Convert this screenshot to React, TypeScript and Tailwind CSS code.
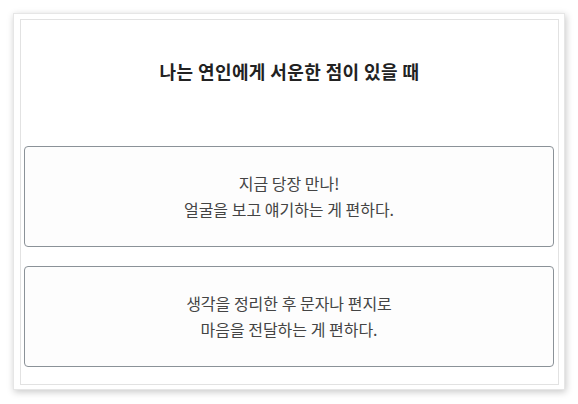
import React from 'react'

const options = [
  ['지금 당장 만나!', '얼굴을 보고 얘기하는 게 편하다.'],
  ['생각을 정리한 후 문자나 편지로', '마음을 전달하는 게 편하다.'],
]

const App = () => {
  return (
    <div
      className="w-[578px] h-[404px] bg-white pt-[13px] pl-[13px]"
      style={{ fontFamily: '"Noto Sans CJK KR", "Noto Sans", sans-serif' }}
    >
      {/* paper frame */}
      <div className="w-[552px] h-[377px] bg-white border border-[#e6e6e6] shadow-[1px_2px_7px_rgba(0,0,0,0.22)] pt-[5px] pl-[6px]">
        <div className="w-[539px] h-[366px] border border-[#e2e2e2] flex flex-col px-[3px]">
          <h1 className="h-[126px] flex items-center justify-center pb-[24px] text-[18px] tracking-[0.4px] font-bold text-[#222]">
            나는 연인에게 서운한 점이 있을 때
          </h1>

          <div className="flex flex-col gap-[19px] pr-[1px]">
            {options.map((lines, i) => (
              <button
                key={i}
                className="h-[101px] w-full rounded-[4px] border border-[#8b9298] bg-[#fdfdfd] flex flex-col items-center justify-center text-[16px] leading-[26px] text-[#444] pb-[2px]"
              >
                <span>{lines[0]}</span>
                <span>{lines[1]}</span>
              </button>
            ))}
          </div>
        </div>
      </div>
    </div>
  )
}

export default App
